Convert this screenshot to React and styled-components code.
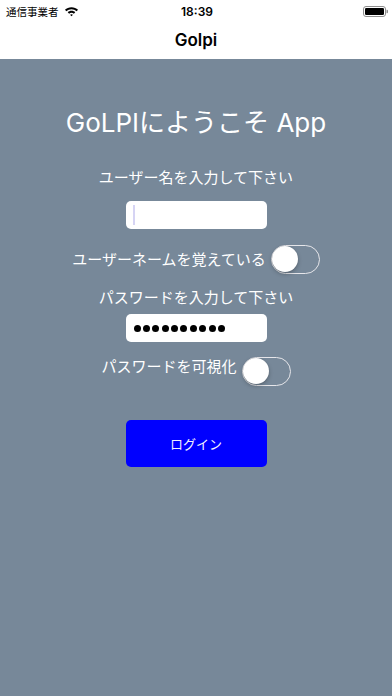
import React from 'react';
import styled, { createGlobalStyle } from 'styled-components';

const GlobalStyle = createGlobalStyle`
    html, body {
        margin: 0;
        padding: 0;
        height: 100%;
        background: #778899;
    }
    #root {
        min-height: 100%;
    }
`;

const Screen = styled.div`
    width: 392px;
    height: 696px;
    display: flex;
    flex-direction: column;
    font-family: Inter, "Noto Sans CJK JP", sans-serif;
    background: #778899;
`;

const StatusBar = styled.div`
    height: 20px;
    background: #fff;
    display: flex;
    align-items: center;
    justify-content: space-between;
    padding: 0 4px 0 6px;
    font-size: 12px;
    color: #000;
`;

const Carrier = styled.div`
    width: 90px;
    display: flex;
    align-items: center;
    gap: 5px;
    font-size: 10.5px;
    margin-top: 2px;
`;

const Clock = styled.div`
    font-weight: 600;
    margin-top: 2px;
`;

const Battery = styled.div`
    width: 90px;
    display: flex;
    justify-content: flex-end;
    margin-top: 2px;
`;

const NavBar = styled.div`
    height: 39px;
    background: #fff;
    display: flex;
    align-items: center;
    justify-content: center;
    font-size: 17px;
    font-weight: 600;
    color: #000;
`;

const Content = styled.div`
    flex: 1;
    display: flex;
    flex-direction: column;
    align-items: center;
    padding-top: 49px;
    color: #fff;
`;

const Title = styled.h1`
    margin: 0 0 30px;
    font-size: 26px;
    line-height: 30px;
    font-weight: 400;
`;

const Label = styled.div`
    font-size: 15px;
    line-height: 20px;
    margin-bottom: ${p => p.gap}px;
`;

const Field = styled.div`
    width: 141px;
    height: 28px;
    box-sizing: border-box;
    background: #fff;
    border-radius: 5px;
    display: flex;
    align-items: center;
    gap: 2.4px;
    padding: 0 8px;
`;

const Caret = styled.span`
    width: 2px;
    height: 20px;
    background: #d6d4f4;
    margin-left: -1px;
`;

const Dot = styled.span`
    width: 7px;
    height: 7px;
    border-radius: 50%;
    background: #000;
`;

const ToggleRow = styled.div`
    display: flex;
    align-items: ${p => (p.low ? 'flex-start' : 'center')};
    gap: 5px;
    margin-top: ${p => p.top}px;
    margin-bottom: ${p => p.bottom}px;
    font-size: 15px;
    line-height: 20px;
`;

const Switch = styled.div`
    position: relative;
    width: 49px;
    height: 29px;
    box-sizing: border-box;
    border: 1.5px solid #e6e6ea;
    border-radius: 15px;
`;

const Knob = styled.div`
    position: absolute;
    top: 0;
    left: 0;
    width: 26px;
    height: 26px;
    border-radius: 50%;
    background: #fff;
    box-shadow: 0 2px 4px rgba(0, 0, 0, 0.25), 0 0 1px rgba(0, 0, 0, 0.2);
`;

const LoginButton = styled.button`
    width: 141px;
    height: 47px;
    border: none;
    border-radius: 5px;
    background: #0000ff;
    color: #f2f2ff;
    font-family: inherit;
    font-size: 13px;
`;

const Wifi = () => (
    <svg width="15" height="11" viewBox="0 0 14 10">
        <path d="M7 1C4.6 1 2.5 1.9 0.9 3.4l1.3 1.3C3.5 3.5 5.2 2.8 7 2.8s3.5 0.7 4.8 1.9l1.3-1.3C11.5 1.9 9.4 1 7 1z" fill="#000" />
        <path d="M7 4.4c-1.4 0-2.6 0.5-3.5 1.4l1.3 1.3C5.4 6.5 6.2 6.2 7 6.2s1.6 0.3 2.2 0.9l1.3-1.3C9.6 4.9 8.4 4.4 7 4.4z" fill="#000" />
        <path d="M7 7.6c-0.5 0-1 0.2-1.3 0.5L7 9.4l1.3-1.3C8 7.8 7.5 7.6 7 7.6z" fill="#000" />
    </svg>
);

const BatteryIcon = () => (
    <svg width="25" height="11" viewBox="0 0 25 11">
        <rect x="0.5" y="0.5" width="22" height="10" rx="2.5" fill="none" stroke="#8e8e8e" strokeWidth="1" />
        <rect x="2" y="2" width="19" height="7" rx="1.2" fill="#000" />
        <path d="M23.5 3.8h0.6a0.9 0.9 0 0 1 0.9 0.9v1.6a0.9 0.9 0 0 1-0.9 0.9h-0.6z" fill="#8e8e8e" />
    </svg>
);

const App = () => {
    return (
        <Screen>
            <GlobalStyle />
            <StatusBar>
                <Carrier>
                    通信事業者
                    <Wifi />
                </Carrier>
                <Clock>18:39</Clock>
                <Battery>
                    <BatteryIcon />
                </Battery>
            </StatusBar>
            <NavBar>Golpi</NavBar>
            <Content>
                <Title>GoLPIにようこそ App</Title>
                <Label gap={13}>ユーザー名を入力して下さい</Label>
                <Field>
                    <Caret />
                </Field>
                <ToggleRow top={16} bottom={14}>
                    <span>ユーザーネームを覚えている</span>
                    <Switch>
                        <Knob />
                    </Switch>
                </ToggleRow>
                <Label gap={6}>パスワードを入力して下さい</Label>
                <Field>
                    {Array.from({ length: 10 }).map((_, i) => (
                        <Dot key={i} />
                    ))}
                </Field>
                <ToggleRow top={15} bottom={34} low>
                    <span>パスワードを可視化</span>
                    <Switch>
                        <Knob />
                    </Switch>
                </ToggleRow>
                <LoginButton>ログイン</LoginButton>
            </Content>
        </Screen>
    );
};

export default App;
